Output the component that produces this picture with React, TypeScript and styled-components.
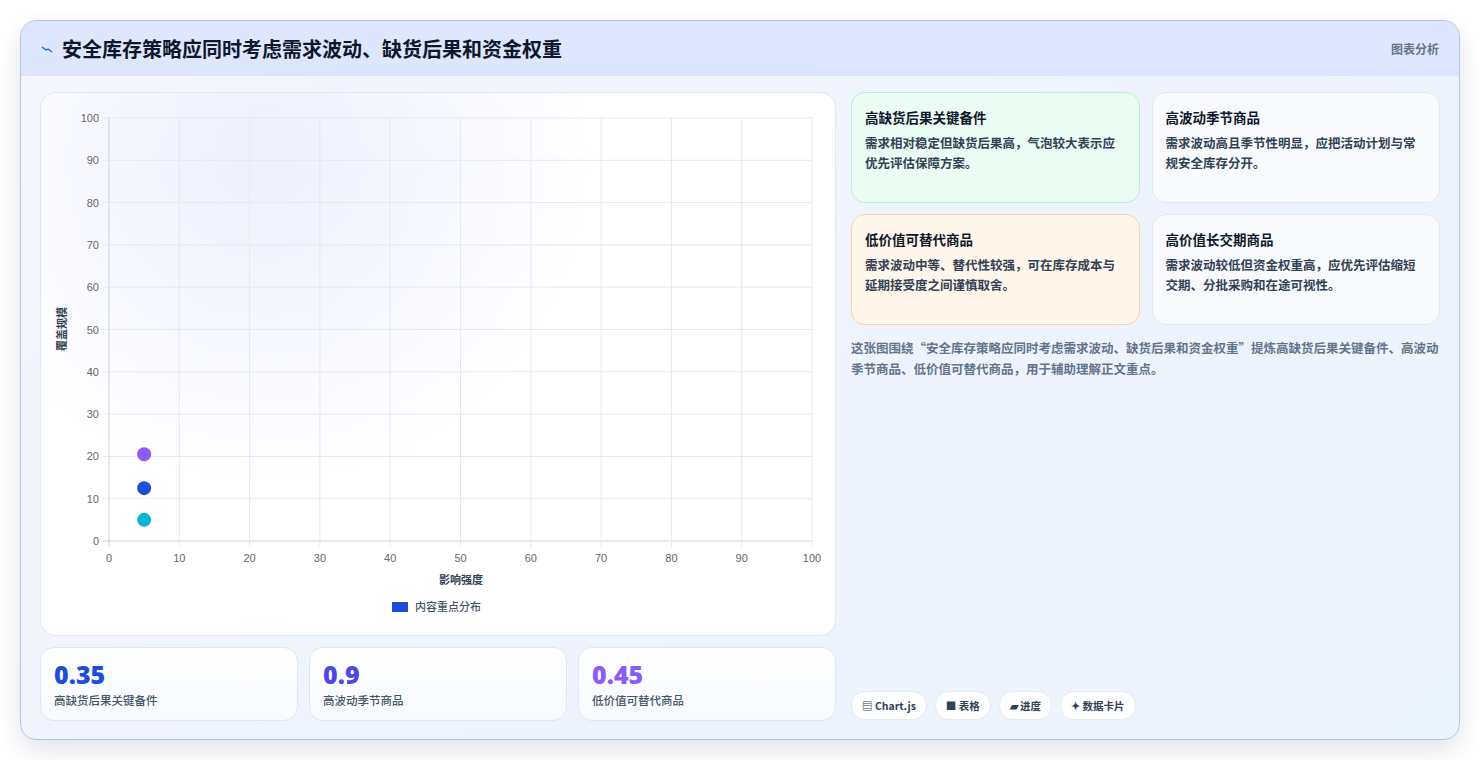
import React from "react";
import styled, { createGlobalStyle } from "styled-components";

const Global = createGlobalStyle`
  html, body { margin: 0; padding: 0; background: #ffffff; }
  body { font-family: "Noto Sans CJK SC", "Noto Sans", sans-serif; }
  #root { width: 1480px; height: 760px; }
`;

const Page = styled.div`
  padding: 20px;
  box-sizing: border-box;
  width: 1480px;
  height: 760px;
`;

const Frame = styled.div`
  height: 720px;
  box-sizing: border-box;
  border: 1px solid #b4c3ea;
  border-radius: 16px;
  overflow: hidden;
  background: linear-gradient(135deg, #f5f6fe 0%, #eef3fd 60%, #ecf4fe 100%);
  box-shadow: 0 10px 24px rgba(30, 41, 80, 0.12);
  display: flex;
  flex-direction: column;
`;

const Header = styled.div`
  height: 55px;
  flex: none;
  background: #dde6fd;
  display: flex;
  align-items: center;
  justify-content: space-between;
  padding: 0 20px;
`;

const Title = styled.div`
  display: flex;
  align-items: center;
  gap: 9px;
  font-size: 20px;
  font-weight: 700;
  color: #0f172a;
`;

const Tag = styled.span`
  font-size: 12px;
  font-weight: 700;
  color: #64748b;
`;

const Body = styled.div`
  flex: 1;
  display: grid;
  grid-template-columns: 796px 1fr;
  gap: 15px;
  padding: 16px 19px 19px 19px;
  min-height: 0;
`;

const LeftCol = styled.div`
  display: flex;
  flex-direction: column;
  gap: 11px;
  min-height: 0;
`;

const ChartCard = styled.div`
  height: 544px;
  box-sizing: border-box;
  background: radial-gradient(circle at 28% 12%, #eef0fd 0%, #ffffff 45%);
  border: 1px solid #e2e8f0;
  border-radius: 16px;
`;

const StatsRow = styled.div`
  display: grid;
  grid-template-columns: repeat(3, 1fr);
  gap: 11px;
  flex: 1;
`;

const Stat = styled.div`
  background: linear-gradient(180deg, #ffffff, #f8faff);
  border: 1px solid #dfe7f5;
  border-radius: 14px;
  padding: 12px 13px;
  display: flex;
  flex-direction: column;
  justify-content: center;
`;

const StatValue = styled.div<{ $c: string }>`
  font-family: "Open Sans", "Noto Sans", sans-serif;
  font-size: 25px;
  font-weight: 800;
  line-height: 28px;
  color: ${(p) => p.$c};
`;

const StatLabel = styled.div`
  font-size: 11.5px;
  font-weight: 500;
  color: #475569;
  margin-top: 4px;
`;

const RightCol = styled.div`
  display: flex;
  flex-direction: column;
`;

const Grid = styled.div`
  display: grid;
  grid-template-columns: 1fr 1fr;
  grid-auto-rows: 111px;
  gap: 11px 12px;
`;

const Card = styled.div<{ $bg: string; $bd: string }>`
  background: ${(p) => p.$bg};
  border: 1px solid ${(p) => p.$bd};
  border-radius: 14px;
  padding: 14px 13px;
  box-sizing: border-box;
`;

const CardTitle = styled.div`
  font-size: 13.5px;
  font-weight: 700;
  color: #0f172a;
  margin-bottom: 6px;
`;

const CardText = styled.div`
  font-size: 12.5px;
  line-height: 20px;
  font-weight: 600;
  color: #334155;
`;

const Desc = styled.div`
  margin-top: 12px;
  font-size: 12.5px;
  line-height: 21px;
  font-weight: 600;
  color: #64748b;
`;

const Chips = styled.div`
  margin-top: auto;
  display: flex;
  gap: 8px;
`;

const Chip = styled.span`
  height: 27px;
  padding: 0 10px;
  display: flex;
  align-items: center;
  gap: 4px;
  border-radius: 14px;
  background: #fff;
  border: 1px solid #e5eaf3;
  font-size: 10.5px;
  font-weight: 700;
  color: #334155;
`;

const X0 = 68, X1 = 771, Y0 = 25, Y1 = 448;
const ticks = [0, 10, 20, 30, 40, 50, 60, 70, 80, 90, 100];
const xp = (v: number) => X0 + ((X1 - X0) * v) / 100;
const yp = (v: number) => Y1 - ((Y1 - Y0) * v) / 100;

function Chart() {
  return (
    <svg width="796" height="544" viewBox="0 0 796 544">
      {ticks.map((t) => (
        <g key={t}>
          <line x1={X0 - 6} x2={X1} y1={yp(t)} y2={yp(t)} stroke={t === 0 ? "#cbd5e1" : "#e5e9f0"} />
          <line x1={xp(t)} x2={xp(t)} y1={Y0} y2={Y1 + 6} stroke={t === 0 ? "#cbd5e1" : "#e5e9f0"} />
          <text x={X0 - 10} y={yp(t) + 4} textAnchor="end" fontSize="11" fill="#666" fontFamily="Liberation Sans, sans-serif">{t}</text>
          <text x={xp(t)} y={Y1 + 21} textAnchor="middle" fontSize="11" fill="#666" fontFamily="Liberation Sans, sans-serif">{t}</text>
        </g>
      ))}
      <text x={420} y={491} textAnchor="middle" fontSize="11" fontWeight="700" fill="#334155">影响强度</text>
      <text transform="translate(25 236) rotate(-90)" textAnchor="middle" fontSize="11" fontWeight="700" fill="#334155">覆盖规模</text>
      <circle cx={xp(5)} cy={yp(20.5)} r="7" fill="#8b5cf6" />
      <circle cx={xp(5)} cy={yp(12.5)} r="7" fill="#1d4ed8" />
      <circle cx={xp(5)} cy={yp(5)} r="7" fill="#06b6d4" />
      <rect x={351} y={509} width={16} height={10} fill="#1d4ed8" />
      <text x={374} y={518} fontSize="11" fontWeight="500" fill="#475569">内容重点分布</text>
    </svg>
  );
}

export default function App() {
  return (
    <Page>
      <Global />
      <Frame>
        <Header>
          <Title>
            <svg width="12" height="10" viewBox="0 0 12 10">
              <path d="M1 3 L5 6 L7 5 L11 8" stroke="#2563eb" strokeWidth="1.4" fill="none" />
            </svg>
            安全库存策略应同时考虑需求波动、缺货后果和资金权重
          </Title>
          <Tag>图表分析</Tag>
        </Header>
        <Body>
          <LeftCol>
            <ChartCard><Chart /></ChartCard>
            <StatsRow>
              <Stat><StatValue $c="#1d4ed8">0.35</StatValue><StatLabel>高缺货后果关键备件</StatLabel></Stat>
              <Stat><StatValue $c="#4f46e5">0.9</StatValue><StatLabel>高波动季节商品</StatLabel></Stat>
              <Stat><StatValue $c="#8b5cf6">0.45</StatValue><StatLabel>低价值可替代商品</StatLabel></Stat>
            </StatsRow>
          </LeftCol>
          <RightCol>
            <Grid>
              <Card $bg="#eafcf3" $bd="#b9efd3">
                <CardTitle>高缺货后果关键备件</CardTitle>
                <CardText>需求相对稳定但缺货后果高，气泡较大表示应优先评估保障方案。</CardText>
              </Card>
              <Card $bg="#f8fafd" $bd="#e2e8f3">
                <CardTitle>高波动季节商品</CardTitle>
                <CardText>需求波动高且季节性明显，应把活动计划与常规安全库存分开。</CardText>
              </Card>
              <Card $bg="#fff6eb" $bd="#f7d6a6">
                <CardTitle>低价值可替代商品</CardTitle>
                <CardText>需求波动中等、替代性较强，可在库存成本与延期接受度之间谨慎取舍。</CardText>
              </Card>
              <Card $bg="#f8fafd" $bd="#e2e8f3">
                <CardTitle>高价值长交期商品</CardTitle>
                <CardText>需求波动较低但资金权重高，应优先评估缩短交期、分批采购和在途可视性。</CardText>
              </Card>
            </Grid>
            <Desc>这张图围绕“安全库存策略应同时考虑需求波动、缺货后果和资金权重”提炼高缺货后果关键备件、高波动季节商品、低价值可替代商品，用于辅助理解正文重点。</Desc>
            <Chips>
              <Chip>▤ Chart.js</Chip>
              <Chip>■ 表格</Chip>
              <Chip>▰ 进度</Chip>
              <Chip>✦ 数据卡片</Chip>
            </Chips>
          </RightCol>
        </Body>
      </Frame>
    </Page>
  );
}
